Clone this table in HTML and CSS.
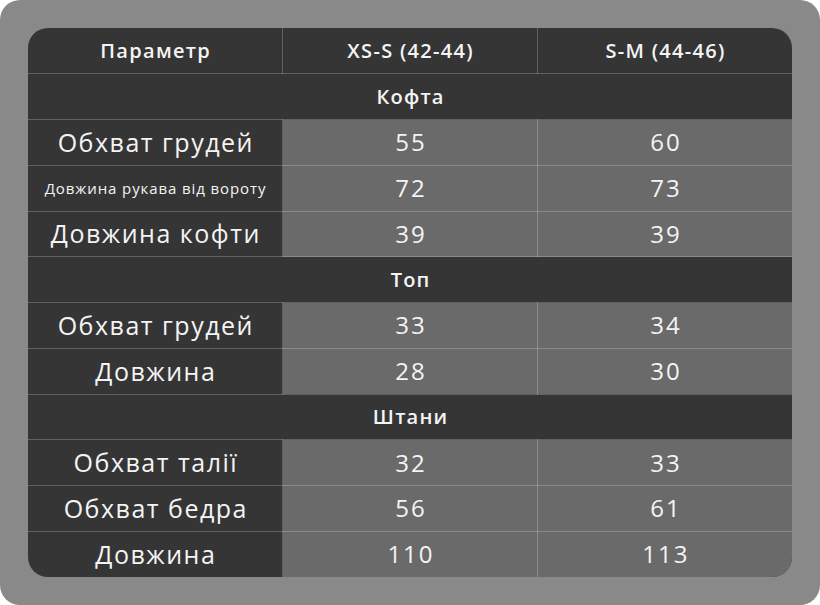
FILE: index.html
```html
<!DOCTYPE html>
<html lang="uk">
<head>
<meta charset="utf-8">
<link rel="stylesheet" href="styles.css">
</head>
<body>
<div class="frame">
  <div class="card">
    <table class="sizes">
      <tr class="head">
        <td>Параметр</td><td>XS-S (42-44)</td><td>S-M (44-46)</td>
      </tr>
      <tr class="section"><td colspan="3">Кофта</td></tr>
      <tr><td class="param">Обхват грудей</td><td class="val">55</td><td class="val">60</td></tr>
      <tr><td class="param small">Довжина рукава від вороту</td><td class="val">72</td><td class="val">73</td></tr>
      <tr><td class="param">Довжина кофти</td><td class="val">39</td><td class="val">39</td></tr>
      <tr class="section"><td colspan="3">Топ</td></tr>
      <tr><td class="param">Обхват грудей</td><td class="val">33</td><td class="val">34</td></tr>
      <tr><td class="param">Довжина</td><td class="val">28</td><td class="val">30</td></tr>
      <tr class="section"><td colspan="3">Штани</td></tr>
      <tr><td class="param">Обхват талії</td><td class="val">32</td><td class="val">33</td></tr>
      <tr><td class="param">Обхват бедра</td><td class="val">56</td><td class="val">61</td></tr>
      <tr><td class="param">Довжина</td><td class="val">110</td><td class="val">113</td></tr>
    </table>
  </div>
</div>
</body>
</html>
```
FILE: styles.css
```css
html, body {
  margin: 0;
  padding: 0;
  background: #ffffff;
}
.frame {
  width: 820px;
  height: 605px;
  box-sizing: border-box;
  padding: 28px;
  background: #898989;
  border-radius: 20px;
}
.card {
  width: 764px;
  height: 549px;
  border-radius: 20px;
  overflow: hidden;
  background: #353535;
}
.sizes {
  width: 764px;
  border-collapse: collapse;
  table-layout: fixed;
  font-family: "Open Sans", "Noto Sans", sans-serif;
  color: #f4f4f4;
}
.sizes tr {
  height: 45.75px;
}
.sizes td {
  border: 1px solid rgba(255,255,255,0.22);
  text-align: center;
  vertical-align: middle;
  padding: 0;
  line-height: 1;
}
.sizes tr:first-child td { border-top: none; }
.sizes tr:last-child td { border-bottom: none; }
.sizes td:first-child { border-left: none; }
.sizes td:last-child { border-right: none; }
.head td {
  font-size: 20px;
  font-weight: 600;
  letter-spacing: 1.3px;
  text-indent: 1.3px;
}
.section td {
  font-size: 20px;
  font-weight: 600;
  letter-spacing: 1.2px;
  text-indent: 1.2px;
}
.param {
  font-size: 25px;
  font-weight: 500;
  letter-spacing: 1.5px;
  text-indent: 1.5px;
}
.param.small {
  font-size: 15px;
  letter-spacing: 0.9px;
  text-indent: 0.9px;
}
.val {
  background: #6a6a6a;
  font-size: 24px;
  font-weight: 500;
  letter-spacing: 2px;
  text-indent: 2px;
}
```
